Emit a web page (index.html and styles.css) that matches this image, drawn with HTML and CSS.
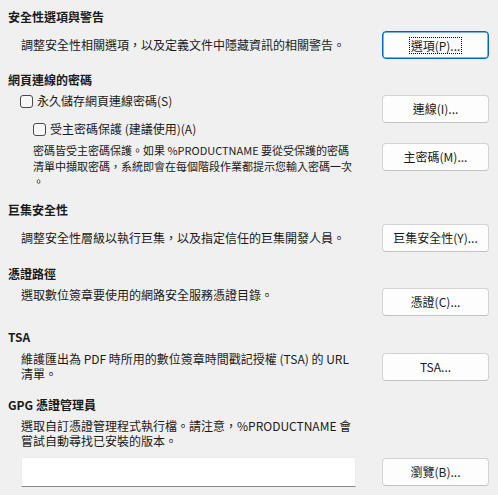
FILE: index.html
```html
<!DOCTYPE html>
<html lang="zh-Hant">
<head>
<meta charset="utf-8">
<title>安全性選項與警告</title>
<link rel="stylesheet" href="styles.css">
</head>
<body>
<div class="dlg">
  <section class="sec s1">
    <h2 class="head">安全性選項與警告</h2>
    <div class="row center">
      <p class="desc">調整安全性相關選項，以及定義文件中隱藏資訊的相關警告。</p>
      <button class="btn focused"><span class="ring">選項(P)...</span></button>
    </div>
  </section>

  <section class="sec s2">
    <h2 class="head">網頁連線的密碼</h2>
    <div class="row top r2">
      <div class="col">
        <label class="check"><span class="box"></span>永久儲存網頁連線密碼(S)</label>
        <label class="check sub"><span class="box"></span>受主密碼保護 (建議使用)(A)</label>
        <p class="desc small">密碼皆受主密碼保護。如果 %PRODUCTNAME 要從受保護的密碼<br>清單中擷取密碼，系統即會在每個階段作業都提示您輸入密碼一次<br>。</p>
      </div>
      <div class="btncol">
        <button class="btn b-conn">連線(I)...</button>
        <button class="btn b-master">主密碼(M)...</button>
      </div>
    </div>
  </section>

  <section class="sec s3">
    <h2 class="head">巨集安全性</h2>
    <div class="row center">
      <p class="desc">調整安全性層級以執行巨集，以及指定信任的巨集開發人員。</p>
      <button class="btn">巨集安全性(Y)...</button>
    </div>
  </section>

  <section class="sec s4">
    <h2 class="head">憑證路徑</h2>
    <div class="row top">
      <p class="desc lift">選取數位簽章要使用的網路安全服務憑證目錄。</p>
      <button class="btn">憑證(C)...</button>
    </div>
  </section>

  <section class="sec s5">
    <h2 class="head">TSA</h2>
    <div class="row top">
      <p class="desc multi">維護匯出為 PDF 時所用的數位簽章時間戳記授權 (TSA) 的 URL<br>清單。</p>
      <button class="btn b-tsa">TSA...</button>
    </div>
  </section>

  <section class="sec s6">
    <h2 class="head">GPG 憑證管理員</h2>
    <p class="desc multi gpg">選取自訂憑證管理程式執行檔。請注意，%PRODUCTNAME 會<br>嘗試自動尋找已安裝的版本。</p>
    <div class="row top r6">
      <input class="path" type="text" value="">
      <button class="btn b-browse">瀏覽(B)...</button>
    </div>
  </section>
</div>
</body>
</html>
```

FILE: styles.css
```css
html, body {
  margin: 0;
  padding: 0;
  background: #f0f0f0;
}

body {
  font-family: "Noto Sans CJK TC", "Noto Sans", sans-serif;
  font-size: 12px;
  color: #1a1a1a;
}

.dlg {
  width: 498px;
  box-sizing: border-box;
  padding: 9px 9px 0 8px;
}

.sec { margin: 0; }
.s2 { margin-top: 13px; }
.s3 { margin-top: 12px; }
.s4 { margin-top: 14px; }
.s5 { margin-top: 13px; }
.s6 { margin-top: 16px; }

.head {
  margin: 0;
  font-size: 12px;
  font-weight: 700;
  line-height: 16px;
  height: 16px;
  color: #1a1a1a;
}

.row {
  display: flex;
  gap: 26px;
  margin-top: 6px;
  padding-left: 13px;
}
.row.center { align-items: center; }
.row.top { align-items: flex-start; }
.r2 { margin-top: 5px; }

.desc {
  margin: 0;
  width: 335px;
  flex: 0 0 335px;
  line-height: 16px;
  white-space: nowrap;
}
.desc.lift { margin-top: -1px; }
.desc.multi { line-height: 15px; }
.desc.gpg {
  margin: 5px 0 0 13px;
}

.col {
  width: 335px;
  flex: 0 0 335px;
  display: flex;
  flex-direction: column;
}

.check {
  display: flex;
  align-items: center;
  gap: 4px;
  height: 16px;
  line-height: 16px;
  margin-left: -1px;
}
.check.sub {
  margin-left: 12px;
  margin-top: 12px;
}
.box {
  width: 13px;
  height: 13px;
  box-sizing: border-box;
  border: 1px solid #4a4a4a;
  border-radius: 3px;
  background: #f7f7f7;
  flex: 0 0 auto;
}

.desc.small {
  width: auto;
  flex: none;
  font-size: 11px;
  line-height: 15.5px;
  margin-top: 6px;
  padding-left: 12px;
}

.btncol {
  display: flex;
  flex-direction: column;
  flex: 0 0 107px;
}

.btn {
  width: 107px;
  height: 28px;
  flex: none;
  box-sizing: border-box;
  border: 1px solid #d3d3d3;
  border-bottom-color: #c2c2c2;
  border-radius: 4px;
  background: #fdfdfd;
  font-family: inherit;
  font-size: 12px;
  color: #1a1a1a;
  padding: 0;
  line-height: 16px;
  display: flex;
  align-items: center;
  justify-content: center;
}
.btn.focused {
  border: 1px solid #0067c0;
  box-shadow: inset 0 0 0 0.5px #0067c0;
}
.ring {
  outline: 1px dotted #000;
  padding: 0 1px;
  line-height: 15px;
}

.b-conn { margin-top: 2px; }
.b-master { margin-top: 20px; }
.b-tsa { margin-top: 2px; }

.r6 { margin-top: 9px; }
.path {
  width: 335px;
  height: 30px;
  flex: 0 0 335px;
  box-sizing: border-box;
  margin: 0;
  background: #ffffff;
  border: 1px solid #ececec;
  border-bottom: 1px solid #8a8a8a;
  border-radius: 2px 2px 0 0;
  padding: 0 8px;
  font-family: inherit;
  font-size: 12px;
}
.b-browse { margin-top: 1px; }
```
